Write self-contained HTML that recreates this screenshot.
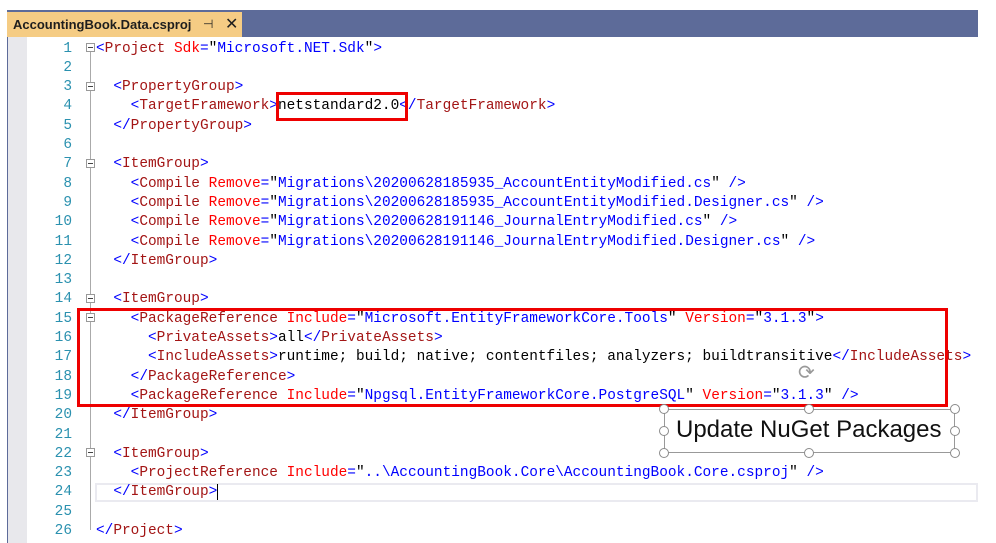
<!DOCTYPE html>
<html><head><meta charset="utf-8"><style>
body{margin:0;width:996px;height:543px;background:#fff;position:relative;overflow:hidden;font-family:"Liberation Sans",sans-serif}
.bar{position:absolute;left:7px;top:10px;width:971px;height:27px;background:#5d6b99}
.tab{position:absolute;left:7px;top:12px;width:235px;height:25px;background:#f5cc84;font:bold 13px "Liberation Sans",sans-serif;color:#1e1e1e;line-height:25px;padding-left:6px;box-sizing:border-box}
.tab .pin{position:absolute;left:196px;font-weight:normal;font-size:12px}
.tab .x{position:absolute;left:218px;font-weight:normal;font-size:16px}
.edge{position:absolute;left:7px;top:37px;width:1px;height:506px;background:#5d6b99}
.marg{position:absolute;left:8px;top:37px;width:19px;height:506px;background:#e8e8ec}
.code{position:absolute;left:0;top:39.5px;font-family:"Liberation Mono",monospace;font-size:14.45px;}
.l{position:absolute;height:19.3px;line-height:19.3px;white-space:pre;left:96px}
.n{position:absolute;width:72px;left:0;text-align:right;color:#2b91af;height:19.3px;line-height:19.3px}
.b{color:#0000ff}.e{color:#a31515}.a{color:#ff0000}.v{color:#0000ff}
.fold{position:absolute;left:86px;width:9px;height:9px;border:1px solid #999;box-sizing:border-box;background:#fff}
.fold:after{content:"";position:absolute;left:1px;top:3px;width:5px;height:1px;background:#444}
.vl{position:absolute;left:90px;width:1px;background:#aaa}
.box{position:absolute;border:3px solid #e00;box-sizing:border-box}
.cur{position:absolute;left:95px;top:483px;width:883px;height:19px;border:2px solid #eaeaf0;box-sizing:border-box}
.h{position:absolute;width:10px;height:10px;border:1.5px solid #8a8a8a;border-radius:50%;background:#fff;box-sizing:border-box}
</style></head><body>
<div class="bar"></div>
<div class="tab">AccountingBook.Data.csproj<span class="pin">⊣</span><span class="x">✕</span></div>
<div class="edge"></div><div class="marg"></div>
<div class="cur"></div>
<div class="vl" style="top:52px;height:478px"></div>
<div class="code">
<div class="n" style="top:0">1</div><div class="n" style="top:19.3px">2</div><div class="n" style="top:38.6px">3</div><div class="n" style="top:57.9px">4</div><div class="n" style="top:77.2px">5</div><div class="n" style="top:96.5px">6</div><div class="n" style="top:115.8px">7</div><div class="n" style="top:135.1px">8</div><div class="n" style="top:154.4px">9</div><div class="n" style="top:173.7px">10</div><div class="n" style="top:193px">11</div><div class="n" style="top:212.3px">12</div><div class="n" style="top:231.6px">13</div><div class="n" style="top:250.9px">14</div><div class="n" style="top:270.2px">15</div><div class="n" style="top:289.5px">16</div><div class="n" style="top:308.8px">17</div><div class="n" style="top:328.1px">18</div><div class="n" style="top:347.4px">19</div><div class="n" style="top:366.7px">20</div><div class="n" style="top:386px">21</div><div class="n" style="top:405.3px">22</div><div class="n" style="top:424.6px">23</div><div class="n" style="top:443.9px">24</div><div class="n" style="top:463.2px">25</div><div class="n" style="top:482.5px">26</div>
<div class="l" style="top:0"><span class="b">&lt;</span><span class="e">Project</span> <span class="a">Sdk</span><span class="b">=</span>"<span class="v">Microsoft.NET.Sdk</span>"<span class="b">&gt;</span></div>
<div class="l" style="top:38.6px">  <span class="b">&lt;</span><span class="e">PropertyGroup</span><span class="b">&gt;</span></div>
<div class="l" style="top:57.9px">    <span class="b">&lt;</span><span class="e">TargetFramework</span><span class="b">&gt;</span>netstandard2.0<span class="b">&lt;/</span><span class="e">TargetFramework</span><span class="b">&gt;</span></div>
<div class="l" style="top:77.2px">  <span class="b">&lt;/</span><span class="e">PropertyGroup</span><span class="b">&gt;</span></div>
<div class="l" style="top:115.8px">  <span class="b">&lt;</span><span class="e">ItemGroup</span><span class="b">&gt;</span></div>
<div class="l" style="top:135.1px">    <span class="b">&lt;</span><span class="e">Compile</span> <span class="a">Remove</span><span class="b">=</span>"<span class="v">Migrations\20200628185935_AccountEntityModified.cs</span>" <span class="b">/&gt;</span></div>
<div class="l" style="top:154.4px">    <span class="b">&lt;</span><span class="e">Compile</span> <span class="a">Remove</span><span class="b">=</span>"<span class="v">Migrations\20200628185935_AccountEntityModified.Designer.cs</span>" <span class="b">/&gt;</span></div>
<div class="l" style="top:173.7px">    <span class="b">&lt;</span><span class="e">Compile</span> <span class="a">Remove</span><span class="b">=</span>"<span class="v">Migrations\20200628191146_JournalEntryModified.cs</span>" <span class="b">/&gt;</span></div>
<div class="l" style="top:193px">    <span class="b">&lt;</span><span class="e">Compile</span> <span class="a">Remove</span><span class="b">=</span>"<span class="v">Migrations\20200628191146_JournalEntryModified.Designer.cs</span>" <span class="b">/&gt;</span></div>
<div class="l" style="top:212.3px">  <span class="b">&lt;/</span><span class="e">ItemGroup</span><span class="b">&gt;</span></div>
<div class="l" style="top:250.9px">  <span class="b">&lt;</span><span class="e">ItemGroup</span><span class="b">&gt;</span></div>
<div class="l" style="top:270.2px">    <span class="b">&lt;</span><span class="e">PackageReference</span> <span class="a">Include</span><span class="b">=</span>"<span class="v">Microsoft.EntityFrameworkCore.Tools</span>" <span class="a">Version</span><span class="b">=</span>"<span class="v">3.1.3</span>"<span class="b">&gt;</span></div>
<div class="l" style="top:289.5px">      <span class="b">&lt;</span><span class="e">PrivateAssets</span><span class="b">&gt;</span>all<span class="b">&lt;/</span><span class="e">PrivateAssets</span><span class="b">&gt;</span></div>
<div class="l" style="top:308.8px">      <span class="b">&lt;</span><span class="e">IncludeAssets</span><span class="b">&gt;</span>runtime; build; native; contentfiles; analyzers; buildtransitive<span class="b">&lt;/</span><span class="e">IncludeAssets</span><span class="b">&gt;</span></div>
<div class="l" style="top:328.1px">    <span class="b">&lt;/</span><span class="e">PackageReference</span><span class="b">&gt;</span></div>
<div class="l" style="top:347.4px">    <span class="b">&lt;</span><span class="e">PackageReference</span> <span class="a">Include</span><span class="b">=</span>"<span class="v">Npgsql.EntityFrameworkCore.PostgreSQL</span>" <span class="a">Version</span><span class="b">=</span>"<span class="v">3.1.3</span>" <span class="b">/&gt;</span></div>
<div class="l" style="top:366.7px">  <span class="b">&lt;/</span><span class="e">ItemGroup</span><span class="b">&gt;</span></div>
<div class="l" style="top:405.3px">  <span class="b">&lt;</span><span class="e">ItemGroup</span><span class="b">&gt;</span></div>
<div class="l" style="top:424.6px">    <span class="b">&lt;</span><span class="e">ProjectReference</span> <span class="a">Include</span><span class="b">=</span>"<span class="v">..\AccountingBook.Core\AccountingBook.Core.csproj</span>" <span class="b">/&gt;</span></div>
<div class="l" style="top:443.9px">  <span class="b">&lt;/</span><span class="e">ItemGroup</span><span class="b">&gt;</span><span style="border-left:1px solid #000"></span></div>
<div class="l" style="top:482.5px"><span class="b">&lt;/</span><span class="e">Project</span><span class="b">&gt;</span></div>
</div>
<div class="fold" style="top:43px"></div>
<div class="fold" style="top:82px"></div>
<div class="fold" style="top:159px"></div>
<div class="fold" style="top:294px"></div>
<div class="fold" style="top:313px"></div>
<div class="fold" style="top:448px"></div>
<div class="box" style="left:276px;top:92px;width:132px;height:29px"></div>
<div class="box" style="left:77px;top:308px;width:871px;height:99px"></div>
<div style="position:absolute;left:664px;top:409px;width:291px;height:44px;border:1px solid #999;box-sizing:border-box"></div>
<div style="position:absolute;left:676px;top:416px;font:24px 'Liberation Sans',sans-serif;color:#111;white-space:nowrap">Update NuGet Packages</div>
<div class="h" style="left:659px;top:404px"></div><div class="h" style="left:804px;top:404px"></div><div class="h" style="left:950px;top:404px"></div>
<div class="h" style="left:659px;top:426px"></div><div class="h" style="left:950px;top:426px"></div>
<div class="h" style="left:659px;top:448px"></div><div class="h" style="left:804px;top:448px"></div><div class="h" style="left:950px;top:448px"></div>
<div style="position:absolute;left:798px;top:360px;font-size:20px;color:#999">⟳</div>
</body></html>
